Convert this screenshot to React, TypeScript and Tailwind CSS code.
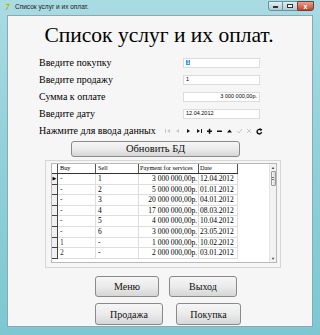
const rows = [
  ['-', '1', '3 000 000,00р.', '12.04.2012'],
  ['-', '2', '5 000 000,00р.', '01.01.2012'],
  ['-', '3', '20 000 000,00р.', '04.01.2012'],
  ['-', '4', '17 000 000,00р.', '08.03.2012'],
  ['-', '5', '4 000 000,00р.', '10.04.2012'],
  ['-', '6', '3 000 000,00р.', '23.05.2012'],
  ['1', '-', '1 000 000,00р.', '10.02.2012'],
  ['2', '-', '2 000 000,00р.', '03.01.2012'],
]

const fields = [
  { label: 'Введите покупку', value: '1', right: false, selected: true },
  { label: 'Введите продажу', value: '1', right: false, selected: false },
  { label: 'Сумма к оплате', value: '3 000 000,00р.', right: true, selected: false },
  { label: 'Введите дату', value: '12.04.2012', right: false, selected: false },
]

function WinButton({ children, className }: { children: React.ReactNode; className: string }) {
  return (
    <div
      className={`flex items-center justify-center rounded-[3px] border border-[#8a8a8a] bg-gradient-to-b from-[#f6f6f6] via-[#ebebeb] to-[#d6d6d6] text-[#111] ${className}`}
    >
      {children}
    </div>
  )
}

function NavIcons() {
  const on = '#111'
  const off = '#c8c8c8'
  return (
    <svg width="112" height="8" viewBox="0 0 112 8">
      {/* first */}
      <rect x="1" y="2" width="1" height="4" fill={off} />
      <path d="M6 2 L3 4 L6 6 Z" fill={off} />
      {/* prior */}
      <path d="M15 2 L12 4 L15 6 Z" fill={off} />
      {/* next */}
      <path d="M23 2 L26 4 L23 6 Z" fill={on} />
      {/* last */}
      <path d="M33 2 L36 4 L33 6 Z" fill={on} />
      <rect x="37" y="2" width="1" height="4" fill={on} />
      {/* insert */}
      <rect x="43" y="3.5" width="5" height="1.5" fill={on} />
      <rect x="44.8" y="1.8" width="1.5" height="5" fill={on} />
      {/* delete */}
      <rect x="53" y="3.5" width="5" height="1.5" fill={on} />
      {/* edit */}
      <path d="M63 5.5 L65.5 2.5 L68 5.5 Z" fill={on} />
      {/* post */}
      <path d="M73 4 L75 6 L78 2" stroke={off} strokeWidth="1" fill="none" />
      {/* cancel */}
      <path d="M83 2 L87 6 M87 2 L83 6" stroke={off} strokeWidth="1" fill="none" />
      {/* refresh */}
      <path d="M97 3 A2.3 2.3 0 1 0 97.6 5.2" stroke={on} strokeWidth="1.4" fill="none" />
      <path d="M95.6 1.3 L98.3 2.3 L96.8 4.4 Z" fill={on} />
    </svg>
  )
}

export default function App() {
  return (
    <div className="w-[320px] h-[335px] bg-gradient-to-b from-[#a9dbe3] via-[#8fd0d9] to-[#7cc8d2] flex flex-col overflow-hidden" style={{ fontFamily: '"Liberation Serif", "DejaVu Serif", serif' }}>
      {/* title bar */}
      <div className="h-[15px] flex items-center pl-[3px] pr-[6px]">
        <div className="w-[9px] h-[9px] flex items-center justify-center text-[8px] font-bold text-[#c99a00] leading-none italic">7</div>
        <span className="ml-[3px] text-[6.5px] text-[#1a1a1a] leading-none" style={{ fontFamily: '"Liberation Sans", Arial, sans-serif' }}>
          Список услуг и их оплат.
        </span>
        <div className="ml-auto flex h-[10px] mt-[-3px]">
          <div className="w-[15px] h-full border border-[#6c8fa0] rounded-bl-[3px] bg-gradient-to-b from-[#e2eef3] to-[#b3cbd6] flex items-end justify-center pb-[2px]">
            <div className="w-[5px] h-[1.5px] bg-white border-[0.5px] border-[#333]" />
          </div>
          <div className="w-[14px] h-full border-y border-[#6c8fa0] bg-gradient-to-b from-[#e2eef3] to-[#b3cbd6] flex items-center justify-center">
            <div className="w-[6px] h-[4px] border border-[#333] bg-white" />
          </div>
          <div className="w-[17px] h-full border border-[#7a3b32] rounded-br-[3px] bg-gradient-to-b from-[#e8a093] to-[#c4412c] flex items-center justify-center text-white text-[7px] font-bold leading-none" style={{ fontFamily: '"Liberation Sans", Arial, sans-serif' }}>
            x
          </div>
        </div>
      </div>

      {/* client area */}
      <div className="mx-[7px] h-[312px] bg-[#f6f6f6] border border-[#8aa9b3] flex flex-col text-black">
        <div className="mt-[7px] text-[21.5px] leading-[25px] text-center pr-[2px]">Список услуг и их оплат.</div>

        <div className="mt-[6px] flex flex-col">
          {fields.map((f) => (
            <div key={f.label} className="h-[17px] flex items-center pl-[31px]">
              <div className="w-[144px] text-[10px] leading-none">{f.label}</div>
              <div
                className={`w-[77px] h-[10px] bg-white border border-[#dcdcdc] flex items-center px-[2px] text-[5.5px] leading-none ${f.right ? 'justify-end' : ''}`}
                style={{ fontFamily: '"Liberation Sans", Arial, sans-serif' }}
              >
                {f.selected ? <span className="bg-[#3399ff] text-white px-[0.5px]">{f.value}</span> : f.value}
              </div>
            </div>
          ))}
          <div className="h-[17px] flex items-center pl-[31px]">
            <div className="w-[125px] text-[10px] leading-none whitespace-nowrap">Нажмите для ввода данных</div>
            <NavIcons />
          </div>
        </div>

        <WinButton className="mt-[2px] ml-[63px] w-[169px] h-[16px] text-[10.5px]">Обновить БД</WinButton>

        {/* grid panel */}
        <div className="mt-[3px] ml-[37px] w-[236px] h-[108px] border border-[#d6d6d6] pt-[2px] pl-[5px]">
          <div className="w-[226px] h-[100px] bg-white border border-[#b8b8b8] flex overflow-hidden">
            <div className="flex flex-col text-[7.5px] leading-none">
              <div className="flex h-[10px] border-b border-[#333] text-[6.3px]">
                <div className="w-[6px] border-r border-[#555]" />
                <div className="w-[38px] border-r border-[#555] pl-[2px] flex items-center">Buy</div>
                <div className="w-[43px] border-r border-[#555] pl-[2px] flex items-center">Sell</div>
                <div className="w-[60px] border-r border-[#555] pl-[1px] flex items-center whitespace-nowrap overflow-hidden">Payment for services</div>
                <div className="w-[39px] border-r border-[#555] pl-[1px] flex items-center">Date</div>
              </div>
              {rows.map((r, i) => (
                <div key={i} className="flex h-[10.6px]">
                  <div className="w-[6px] border-r border-b border-[#444] bg-[#f0f0f0] flex items-center justify-center">
                    {i === 0 && <span className="text-[5px] leading-none">▶</span>}
                  </div>
                  <div className="w-[38px] border-r border-b border-[#dedede] pl-[2px] flex items-center text-[#333]">{r[0]}</div>
                  <div className="w-[43px] border-r border-b border-[#dedede] pl-[2px] flex items-center">{r[1]}</div>
                  <div className="w-[60px] border-r border-b border-[#dedede] pr-[1px] flex items-center justify-end whitespace-nowrap">{r[2]}</div>
                  <div className="w-[39px] border-r border-b border-[#dedede] pl-[1px] flex items-center whitespace-nowrap overflow-hidden">{r[3]}</div>
                </div>
              ))}
            </div>
            <div className="flex-1" />
            <div className="w-[7px] bg-[#f2f2f2] border-l border-[#e4e4e4] flex flex-col items-center">
              <div className="h-[7px] text-[4px] leading-[7px] text-[#444]">▲</div>
              <div className="w-[5px] h-[15px] bg-gradient-to-r from-[#f4f4f4] to-[#d8d8d8] border border-[#9a9a9a] rounded-[1px] flex items-center justify-center">
                <div className="w-[2px] h-[3px] border-y border-[#777]" />
              </div>
              <div className="flex-1" />
              <div className="h-[7px] text-[4px] leading-[7px] text-[#444]">▼</div>
            </div>
          </div>
        </div>

        <div className="mt-[8px] ml-[87px] flex gap-[10px]">
          <WinButton className="w-[64px] h-[21px] text-[10px]">Меню</WinButton>
          <WinButton className="w-[68px] h-[21px] text-[10px]">Выход</WinButton>
        </div>
        <div className="mt-[6px] ml-[87px] flex gap-[13px]">
          <WinButton className="w-[68px] h-[22px] text-[10px]">Продажа</WinButton>
          <WinButton className="w-[65px] h-[22px] text-[10px]">Покупка</WinButton>
        </div>
      </div>
    </div>
  )
}
